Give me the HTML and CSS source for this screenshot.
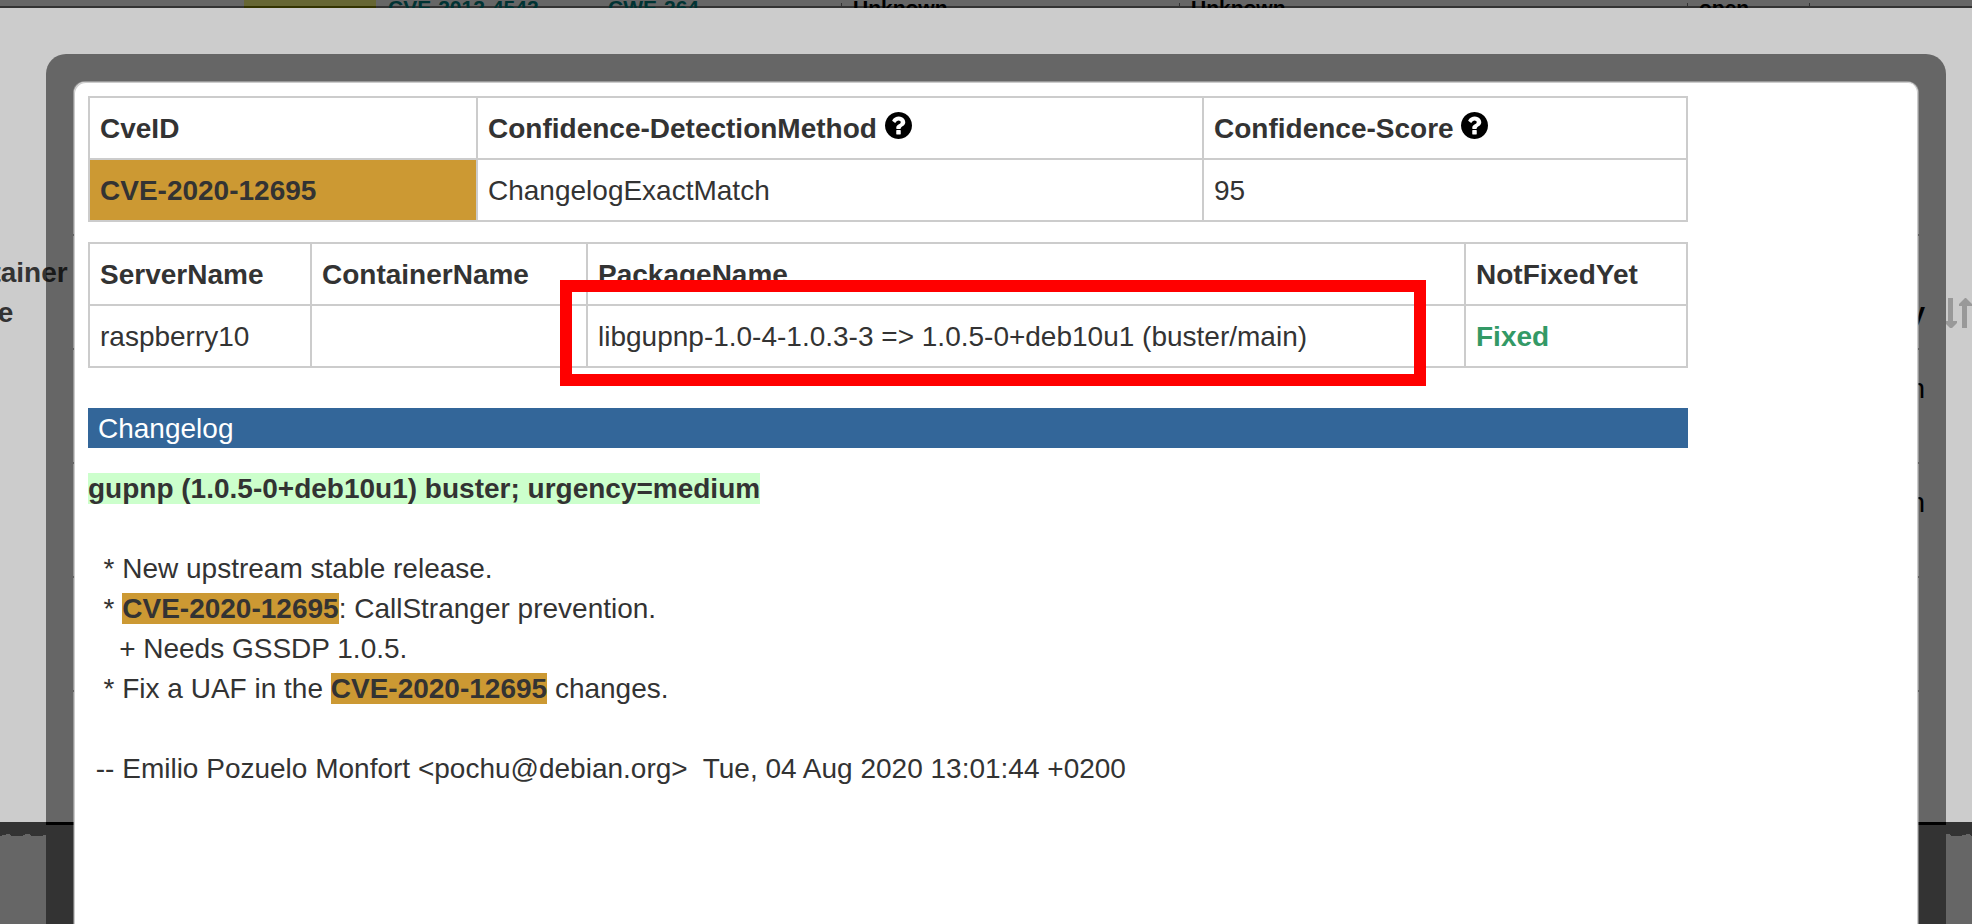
FILE: index.html
```html
<!DOCTYPE html>
<html lang="en">
<head>
<meta charset="utf-8">
<title>CVE-2020-12695</title>
<link rel="stylesheet" href="styles.css">
</head>
<body>
<div class="page">
  <div class="strip">
    <div class="strip-row">
      <span class="cell"></span>
      <span class="cell severity"></span>
      <a class="cell link" href="#">CVE-2012-4542</a>
      <a class="cell link" href="#">CWE-264</a>
      <span class="cell ruled">Unknown</span>
      <span class="cell ruled">Unknown</span>
      <span class="cell ruled">open</span>
      <span class="cell ruled"></span>
    </div>
  </div>
  <div class="list">
    <div class="list-row list-head">
      <div class="list-name">Container<br>Name</div>
      <div class="list-sort">y
        <svg class="sort-icon" viewBox="0 0 26 30" aria-hidden="true"><path d="M2 0h5v23h4v2l-5 5h-2l-5-5v-2h3zM19 0h1l6 6v2h-5v22h-5v-22h-3v-2z"/></svg>
      </div>
    </div>
    <div class="list-row"><div class="list-end">n</div></div>
    <div class="list-row"><div class="list-end">n</div></div>
    <div class="list-row"></div>
    <div class="list-row"></div>
  </div>
  <footer class="footer">
    <svg class="edge-left" viewBox="0 0 46 14" aria-hidden="true"><path d="M0 0h46v13h-3v1h-12v-1h-1v-1h-5v1h-2v1h-12v-1h-1v-1h-4v1h-4v1h-2z"/></svg>
    <div class="edge-mid"></div>
    <svg class="edge-right" viewBox="0 0 26 14" aria-hidden="true"><path d="M0 0h26v14h-1v-1h-1v-1h-4v1h-4v1h-11v-1h-1v-1h-4z"/></svg>
  </footer>
</div>

<div class="frame">
  <main class="panel">
    <table class="grid">
      <colgroup><col class="c-id"><col class="c-method"><col></colgroup>
      <tr>
        <th>CveID</th>
        <th>Confidence-DetectionMethod <svg class="help" viewBox="128 128 1536 1536" aria-hidden="true"><path d="M1024 1376v-192q0-14-9-23t-23-9h-192q-14 0-23 9t-9 23v192q0 14 9 23t23 9h192q14 0 23-9t9-23zm256-672q0-88-55.500-163t-138.500-116-170-41q-243 0-371 213-15 24 8 42l132 100q7 6 19 6 16 0 25-12 53-68 86-92 34-24 86-24 48 0 85.500 26t37.500 59q0 38-20 61t-68 45q-63 28-115.500 86.500t-52.500 125.500v36q0 14 9 23t23 9h192q14 0 23-9t9-23q0-19 21.500-49.500t54.500-49.500q32-18 49-28.500t46-35 44.500-48 28-60.500 12.500-81zm384 192q0 209-103 385.500t-279.500 279.500-385.500 103-385.500-103-279.500-279.500-103-385.500 103-385.500 279.500-279.500 385.500-103 385.500 103 279.500 279.500 103 385.500z"/></svg></th>
        <th>Confidence-Score <svg class="help" viewBox="128 128 1536 1536" aria-hidden="true"><path d="M1024 1376v-192q0-14-9-23t-23-9h-192q-14 0-23 9t-9 23v192q0 14 9 23t23 9h192q14 0 23-9t9-23zm256-672q0-88-55.500-163t-138.500-116-170-41q-243 0-371 213-15 24 8 42l132 100q7 6 19 6 16 0 25-12 53-68 86-92 34-24 86-24 48 0 85.500 26t37.500 59q0 38-20 61t-68 45q-63 28-115.500 86.500t-52.500 125.500v36q0 14 9 23t23 9h192q14 0 23-9t9-23q0-19 21.500-49.500t54.500-49.500q32-18 49-28.500t46-35 44.500-48 28-60.500 12.500-81zm384 192q0 209-103 385.500t-279.500 279.500-385.500 103-385.500-103-279.500-279.500-103-385.500 103-385.500 279.500-279.500 385.500-103 385.500 103 279.500 279.500 103 385.500z"/></svg></th>
      </tr>
      <tr>
        <td class="cve">CVE-2020-12695</td>
        <td>ChangelogExactMatch</td>
        <td>95</td>
      </tr>
    </table>

    <div class="packages">
      <table class="grid">
        <colgroup><col class="c-server"><col class="c-container"><col class="c-package"><col></colgroup>
        <tr>
          <th>ServerName</th>
          <th>ContainerName</th>
          <th>PackageName</th>
          <th>NotFixedYet</th>
        </tr>
        <tr>
          <td>raspberry10</td>
          <td></td>
          <td>libgupnp-1.0-4-1.0.3-3 =&gt; 1.0.5-0+deb10u1 (buster/main)</td>
          <td class="fixed">Fixed</td>
        </tr>
      </table>
      <div class="marker"></div>
    </div>

    <div class="title">Changelog</div>
    <div class="log"><b class="entry">gupnp (1.0.5-0+deb10u1) buster; urgency=medium</b>

  * New upstream stable release.
  * <b class="cve">CVE-2020-12695</b>: CallStranger prevention.
    + Needs GSSDP 1.0.5.
  * Fix a UAF in the <b class="cve">CVE-2020-12695</b> changes.

 -- Emilio Pozuelo Monfort &lt;pochu@debian.org&gt;  Tue, 04 Aug 2020 13:01:44 +0200</div>
  </main>
</div>
</body>
</html>
```
FILE: styles.css
```css
* {
  box-sizing: border-box;
}

body {
  margin: 0;
  height: 100vh;
  overflow: hidden;
  position: relative;
  background: #ccc;
  color: #333;
  font: 28px/40px "Liberation Sans", Arial, sans-serif;
}

.page {
  height: 100vh;
  display: flex;
  flex-direction: column;
  overflow: hidden;
}

/* Last visible row of the vulnerability list */
.strip {
  flex: none;
  height: 8px;
  overflow: hidden;
  background: linear-gradient(#666 6px, #333 6px);
}

.strip-row {
  display: grid;
  grid-template-columns: 244fr 132fr 220fr 245fr 338fr 508fr 122fr 163fr;
  margin-top: -4px;
  height: 24px;
  font-size: 21px;
  font-weight: bold;
  line-height: 24px;
}

.cell {
  min-width: 0;
  padding-left: 12px;
  color: #000;
}

.severity {
  background: linear-gradient(#663 10px, #330 10px);
}

.link {
  color: #033;
  text-decoration: none;
}

.ruled {
  background: linear-gradient(#333, #333) 0 7px / 1px 100% no-repeat;
}

/* Scrolled list behind the dialog */
.list {
  flex: none;
  margin-top: 226px;
}

.list-row {
  height: 114px;
  padding-top: 21px;
  display: flex;
  justify-content: flex-end;
  background: linear-gradient(#333, #333) 73px 0 / calc(100% - 126px) 2px no-repeat;
  color: #000;
}

.list-head {
  padding: 0 0 15px;
  justify-content: space-between;
  align-items: flex-end;
  font-weight: bold;
}

.list-name {
  margin-left: -63px;
  color: #333;
}

.list-sort {
  display: flex;
  align-items: center;
  gap: 21px;
}

.sort-icon {
  width: 26px;
  height: 30px;
  fill: #999;
}

.list-end {
  padding-right: 47px;
}

.footer {
  flex: 1;
  margin-top: 18px;
  display: flex;
  align-items: flex-start;
  background: #666;
}

.edge-left,
.edge-right {
  flex: none;
  height: 14px;
  fill: #333;
}

.edge-left {
  width: 46px;
}

.edge-right {
  width: 26px;
}

.edge-mid {
  flex: 1;
  height: 3px;
  background: #000;
}

/* Dialog */
.frame {
  position: absolute;
  inset: 54px 26px 0 46px;
  display: flex;
  padding: 27px 27px 0;
  border-radius: 20px 20px 0 0;
  background: rgba(0, 0, 0, 0.5);
}

.panel {
  flex: 1;
  min-width: 0;
  padding: 14px 14px 0;
  border: 1px solid rgba(255, 255, 255, 0.33);
  border-bottom: 0;
  border-radius: 12px 12px 0 0;
  background: #fff;
  background-clip: padding-box;
  box-shadow: inset 1px 1px #ccc, inset -1px 0 #ccc;
}

.grid {
  width: 100%;
  max-width: 1600px;
  table-layout: fixed;
  border-collapse: collapse;
}

.grid th,
.grid td {
  height: 62px;
  padding: 11px 10px 9px;
  border: 2px solid #ccc;
  text-align: left;
}

.c-id {
  width: 388px;
}

.c-method {
  width: 726px;
}

.c-server {
  width: 222px;
}

.c-container {
  width: 276px;
}

.c-package {
  width: 878px;
}

.cve {
  background: #c93;
  font-weight: bold;
}

.fixed {
  color: #396;
  font-weight: bold;
}

.help {
  width: 27px;
  height: 27px;
  vertical-align: -1px;
  fill: #000;
}

.packages {
  position: relative;
  max-width: 1600px;
  margin: 20px 0 40px;
}

.marker {
  position: absolute;
  inset: 38px 262px -18px 472px;
  border: 12px solid #f00;
}

.title {
  max-width: 1600px;
  height: 40px;
  padding: 1px 10px 0;
  background: #369;
  color: #fff;
}

.log {
  margin-top: 21px;
  white-space: pre-wrap;
}

.entry {
  background: #cfc;
}
```
